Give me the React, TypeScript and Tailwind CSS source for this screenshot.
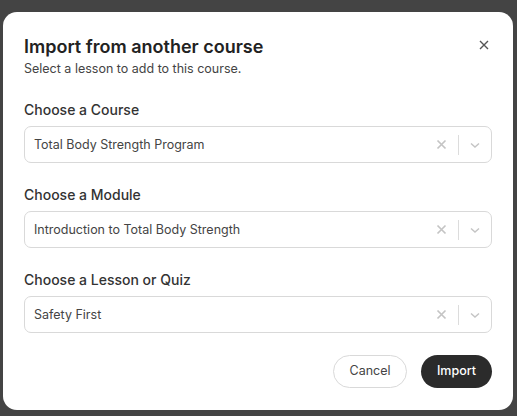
import React from "react";

const fields = [
  { label: "Choose a Course", value: "Total Body Strength Program" },
  { label: "Choose a Module", value: "Introduction to Total Body Strength" },
  { label: "Choose a Lesson or Quiz", value: "Safety First" },
];

const SelectBox = ({ value }: { value: string }) => {
  return (
    <div className="flex h-[37px] items-center rounded-[7px] border border-[#d9d9d9] bg-white pl-[9px] pr-[6px]">
      <span className="mt-[1px] flex-1 text-[12.5px] text-[#444]">{value}</span>
      <svg width="11" height="11" viewBox="0 0 11 11" className="mr-[11px]">
        <path d="M1.5 1.5 L9.5 9.5 M9.5 1.5 L1.5 9.5" stroke="#c4c4c4" strokeWidth="1.7" />
      </svg>
      <div className="h-[20px] w-px bg-[#dcdcdc]" />
      <svg width="12" height="12" viewBox="0 0 12 12" className="ml-[10px] mr-[4px]">
        <path d="M2 4.5 L6 8 L10 4.5" fill="none" stroke="#c4c4c4" strokeWidth="1.4" />
      </svg>
    </div>
  );
};

export default function App() {
  return (
    <div
      className="h-[416px] w-[517px] overflow-hidden bg-[#444] pt-[12px] pl-[3px]"
      style={{ fontFamily: "Inter, 'Noto Sans', sans-serif" }}
    >
      <div className="h-[398px] w-[510px] rounded-[14px] bg-white px-[21px] pt-[23px]">
        <div className="flex items-start justify-between">
          <div>
            <h2 className="text-[18px] font-semibold leading-[24px] text-[#222]">
              Import from another course
            </h2>
            <p className="mt-[1px] text-[12.5px] leading-[18px] text-[#444]">
              Select a lesson to add to this course.
            </p>
          </div>
          <svg width="10" height="10" viewBox="0 0 10 10" className="mt-[5px] mr-[3px]">
            <path d="M1 1 L9 9 M9 1 L1 9" stroke="#555" strokeWidth="1.4" />
          </svg>
        </div>

        <div className="mt-[23px] flex flex-col gap-[23px]">
          {fields.map((item, index) => (
            <div key={index}>
              <div className="mb-[7px] text-[14px] font-medium leading-[18px] text-[#333]">
                {item.label}
              </div>
              <SelectBox value={item.value} />
            </div>
          ))}
        </div>

        <div className="mt-[22px] flex justify-end gap-[14px]">
          <button className="h-[33px] w-[74px] rounded-full border border-[#d9d9d9] bg-white text-[12.5px] text-[#444]">
            Cancel
          </button>
          <button className="h-[33px] w-[71px] rounded-full bg-[#2b2b2b] text-[12.5px] font-medium text-white">
            Import
          </button>
        </div>
      </div>
    </div>
  );
}
